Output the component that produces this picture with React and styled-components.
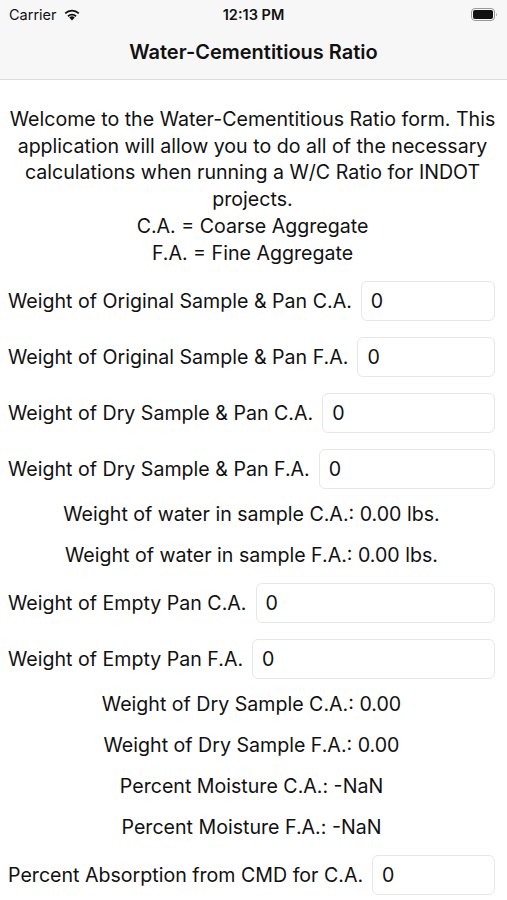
import React from 'react';
import styled, { createGlobalStyle } from 'styled-components';

const GlobalStyle = createGlobalStyle`
  body {
    margin: 0;
    background: #fff;
    font-family: Inter, "Noto Sans", sans-serif;
    color: #111;
  }
`;

// Styles

const Header = styled.header`
  background: #f7f7f7;
  border-bottom: 1px solid #dcdcdc;
  height: 79px;
  display: flex;
  flex-direction: column;
`;

const StatusBar = styled.div`
  height: 28px;
  display: grid;
  grid-template-columns: 1fr auto 1fr;
  align-items: center;
  padding: 0 9px;
  font-size: 14.5px;
  .left {
    display: flex;
    align-items: center;
    gap: 6px;
  }
  .time {
    font-weight: 600;
  }
  .right {
    display: flex;
    justify-content: flex-end;
  }
`;

const Title = styled.h1`
  flex: 1;
  margin: 0;
  display: flex;
  align-items: center;
  justify-content: center;
  font-size: 20px;
  font-weight: 600;
  padding-bottom: 3px;
`;

const Form = styled.main`
  display: flex;
  flex-direction: column;
  gap: 16px;
  padding: 26px 12px 0 8px;
`;

const Intro = styled.p`
  margin: 0 -6px -1px -4px;
  text-align: center;
  font-size: 19.6px;
  line-height: 26.7px;
`;

const Row = styled.label`
  display: flex;
  align-items: center;
  height: 40px;
  font-size: 19.6px;
  white-space: nowrap;
`;

const Field = styled.input`
  flex: 1;
  min-width: 0;
  height: 40px;
  box-sizing: border-box;
  margin-left: 9px;
  border: 1px solid #e7e7e7;
  border-radius: 6px;
  padding: 0 9px;
  font: inherit;
  color: #111;
  outline: none;
`;

const Output = styled.div`
  text-align: center;
  font-size: 19.6px;
  line-height: 25px;
  ${Row} + & {
    margin-top: -3px;
  }
  & + ${Row} {
    margin-top: -1px;
  }
`;

const Wifi = () => (
  <svg width="18" height="13" viewBox="0 0 18 13">
    <path d="M9 12.5 L6.3 9.6 A4 4 0 0 1 11.7 9.6 Z" fill="#111" />
    <path d="M4.4 7.6 A6.6 6.6 0 0 1 13.6 7.6 L12.4 8.9 A4.9 4.9 0 0 0 5.6 8.9 Z" fill="#111" />
    <path d="M1.6 4.8 A10.5 10.5 0 0 1 16.4 4.8 L15.2 6.1 A8.7 8.7 0 0 0 2.8 6.1 Z" fill="#111" />
  </svg>
);

const Battery = () => (
  <svg width="27" height="13" viewBox="0 0 27 13">
    <rect x="0.5" y="0.5" width="23" height="12" rx="3.5" fill="none" stroke="#999" />
    <rect x="2" y="2" width="20" height="9" rx="2" fill="#111" />
    <path d="M25 4.5 Q26.5 6.5 25 8.5 Z" fill="#999" />
  </svg>
);

const inputs = [
  { label: 'Weight of Original Sample & Pan C.A.' },
  { label: 'Weight of Original Sample & Pan F.A.' },
  { label: 'Weight of Dry Sample & Pan C.A.' },
  { label: 'Weight of Dry Sample & Pan F.A.' },
  { text: 'Weight of water in sample C.A.: 0.00 lbs.' },
  { text: 'Weight of water in sample F.A.: 0.00 lbs.' },
  { label: 'Weight of Empty Pan C.A.' },
  { label: 'Weight of Empty Pan F.A.' },
  { text: 'Weight of Dry Sample C.A.: 0.00' },
  { text: 'Weight of Dry Sample F.A.: 0.00' },
  { text: 'Percent Moisture C.A.: -NaN' },
  { text: 'Percent Moisture F.A.: -NaN' },
  { label: 'Percent Absorption from CMD for C.A.' },
];

const App = () => {
  return (
    <>
      <GlobalStyle />
      <Header>
        <StatusBar>
          <div className="left">
            Carrier <Wifi />
          </div>
          <div className="time">12:13 PM</div>
          <div className="right">
            <Battery />
          </div>
        </StatusBar>
        <Title>Water-Cementitious Ratio</Title>
      </Header>
      <Form>
        <Intro>
          Welcome to the Water-Cementitious Ratio form. This application will
          allow you to do all of the necessary calculations when running a W/C
          Ratio for INDOT projects.
          <br />
          C.A. = Coarse Aggregate
          <br />
          F.A. = Fine Aggregate
        </Intro>
        {inputs.map((item, i) =>
          item.label ? (
            <Row key={i}>
              {item.label}
              <Field defaultValue="0" />
            </Row>
          ) : (
            <Output key={i}>{item.text}</Output>
          )
        )}
      </Form>
    </>
  );
};

export default App;
